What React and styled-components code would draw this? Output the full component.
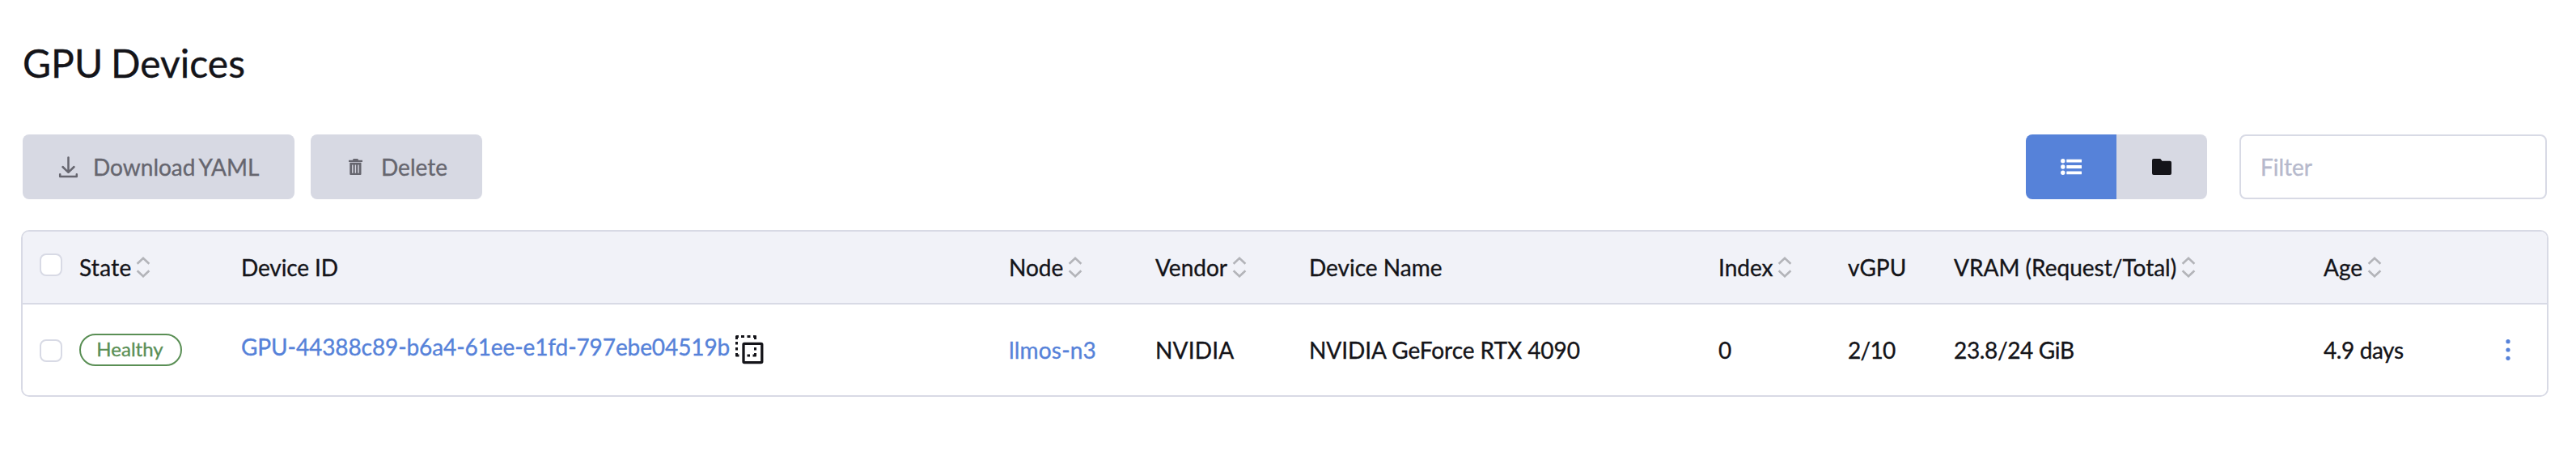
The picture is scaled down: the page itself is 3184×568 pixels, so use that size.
import React from "react";
import styled, { createGlobalStyle } from "styled-components";

const Global = createGlobalStyle`
  * { box-sizing: border-box; }
  body {
    margin: 0;
    background: #fff;
    color: #141419;
    font: 28px/34px Lato, sans-serif;
    -webkit-text-stroke: 0.35px;
  }
`;
const Page = styled.main`
  width: 3184px;
  height: 568px;
  padding: 49px 34px 0 26px;
`;
const Title = styled.h1`
  margin: 0 0 59px;
  padding-left: 2px;
  font-size: 48px;
  line-height: 58px;
  font-weight: 400;
  word-spacing: -2.4px;
`;
const Toolbar = styled.div`
  display: flex;
  height: 80px;
  margin: 0 2px 38px;
`;
const ActionButton = styled.button`
  display: flex;
  align-items: center;
  width: ${(p) => p.$width}px;
  margin-right: 20px;
  padding: 0 0 0 42px;
  border: 0;
  border-radius: 8px;
  background: #d7d9e3;
  color: #66666f;
  font: inherit;
  word-spacing: -2px;
  svg { margin-right: 13px; }
`;
const Toggle = styled.div`
  display: flex;
  margin-left: auto;
  border-radius: 8px;
  overflow: hidden;
`;
const ToggleButton = styled.button`
  display: flex;
  align-items: center;
  justify-content: center;
  width: 112px;
  padding: 0;
  border: 0;
  color: ${(p) => (p.$active ? "#fff" : "#141419")};
  background: ${(p) => (p.$active ? "#5682d9" : "#d7d9e3")};
`;
const Filter = styled.input`
  width: 380px;
  margin-left: 40px;
  padding: 0 24px;
  border: 2px solid #d8dae5;
  border-radius: 8px;
  background: #fff;
  font: inherit;
  &::placeholder { color: #b6b9cc; opacity: 1; }
`;
const Table = styled.section`
  border: 2px solid #d8dae5;
  border-radius: 10px;
  overflow: hidden;
`;
const Row = styled.div`
  display: grid;
  grid-template-columns: 70px 200px 949px 181px 190px 506px 160px 131px 457px 1fr 54px;
  align-items: center;
  height: ${(p) => (p.$head ? 90 : 112)}px;
  background: ${(p) => (p.$head ? "#f1f2f8" : "#fff")};
  border-bottom: ${(p) => (p.$head ? "2px solid #d8dae5" : "0")};
`;
const Cell = styled.div`
  display: flex;
  align-items: center;
  white-space: nowrap;
  letter-spacing: ${(p) => p.$track || 0}px;
`;
const Check = styled.span`
  width: 28px;
  height: 28px;
  margin-left: 21px;
  margin-bottom: ${(p) => p.$lift || 0}px;
  margin-top: ${(p) => p.$drop || 0}px;
  border: 2px solid #d8dae5;
  border-radius: 8px;
  background: #fff;
`;
const Badge = styled.span`
  display: flex;
  align-items: center;
  justify-content: center;
  width: 127px;
  height: 40px;
  padding: 0 2px 2px 0;
  border: 2px solid #5a8f55;
  border-radius: 20px;
  color: #5a8f55;
  font-size: 24px;
  line-height: 30px;
`;
const Link = styled.a`
  color: #5682d9;
  margin-bottom: ${(p) => p.$lift || 0}px;
`;
const SortSvg = styled.svg`
  margin-left: 5.5px;
`;
const CopySvg = styled.svg`
  margin-left: 7px;
`;

const Sort = () => (
  <SortSvg width="18" height="28" viewBox="0 0 18 28" fill="none" stroke="#b3b4b9" strokeWidth="2.6">
    <path d="M1.6 9.800 9 2.700 16.400 9.800M1.600 18.200 9 25.300 16.400 18.200" />
  </SortSvg>
);
const DownloadIcon = () => (
  <svg width="32" height="32" viewBox="0 0 32 32" fill="none" stroke="currentColor" strokeWidth="2.5" strokeLinecap="round" strokeLinejoin="round">
    <path d="M14.500 4.500V22M7.500 16 14.500 22.800 21.500 16M4.200 25.300V27.900H24.800V25.300" />
  </svg>
);
const TrashIcon = () => (
  <svg width="32" height="32" viewBox="0 0 32 32" fill="currentColor">
    <path fillRule="evenodd" d="M5 7.700H9.800L10.800 6H16.200L17.200 7.700H22V10H5ZM6.300 10.800H20.500V25Q20.500 26 19.500 26H7.300Q6.300 26 6.300 25ZM9.100 13.500V23.700H10.500V13.500ZM12.700 13.500V23.700H14.100V13.500ZM16.300 13.500V23.700H17.700V13.500Z" />
  </svg>
);
const ListIcon = () => (
  <svg width="28" height="24" viewBox="0 0 28 24" fill="currentColor">
    {[4.7, 12, 19.3].map((y) => (
      <g key={y}>
        <circle cx="3.800" cy={y} r="2.700" />
        <rect x="8.300" y={y - 1.9} width="18.700" height="3.800" rx="0.500" />
      </g>
    ))}
  </svg>
);
const FolderIcon = () => (
  <svg width="28" height="24" viewBox="0 0 28 24" fill="currentColor">
    <path d="M4 2H11.500Q12.500 2 13 2.800L14.300 4.800H24Q26 4.800 26 6.800V20Q26 22 24 22H4Q2 22 2 20V4Q2 2 4 2Z" />
  </svg>
);
const CopyIcon = () => (
  <CopySvg width="36" height="36" viewBox="0 0 36 36" fill="#141419">
    <path d="M1 0H4V3H3V5H0V1ZM7 0H11V3H7ZM14.500 0H18.500V3H14.500ZM22 0H25Q26 0 26 1V5H23V3H22ZM0 8H3V11.500H0ZM0 15H3V18.500H0ZM0 22H3V23.500H4.500V26.500H1Q0 26.500 0 25.500ZM14.500 23.500H18V26.500H14.500ZM23 15H26V18.500H23ZM23 22H26V25.500Q26 26.500 25 26.500H21.500V23.500H23Z" />
    <rect x="10" y="10.300" width="22.800" height="23.300" rx="1" fill="none" stroke="#141419" strokeWidth="3.300" />
  </CopySvg>
);
const Dots = () => (
  <svg width="12" height="28" viewBox="0 0 12 28" fill="#5682d9">
    <circle cx="6" cy="3.700" r="2.600" />
    <circle cx="6" cy="14" r="2.600" />
    <circle cx="6" cy="24.300" r="2.600" />
  </svg>
);

const columns = [
  ["State", true, 0.3], ["Device ID", false, -0.1], ["Node", true], ["Vendor", true], ["Device Name", false],
  ["Index", true], ["vGPU", false], ["VRAM (Request/Total)", true], ["Age", true],
];

export default function App() {
  return (
    <Page>
      <Global />
      <Title>GPU Devices</Title>
      <Toolbar>
        <ActionButton $width={336}><DownloadIcon />Download YAML</ActionButton>
        <ActionButton $width={212}><TrashIcon />Delete</ActionButton>
        <Toggle>
          <ToggleButton $active><ListIcon /></ToggleButton>
          <ToggleButton><FolderIcon /></ToggleButton>
        </Toggle>
        <Filter placeholder="Filter" />
      </Toolbar>
      <Table>
        <Row $head>
          <Check $lift={6} />
          {columns.map(([name, sortable, track]) => (
            <Cell key={name} $track={track}>{name}{sortable && <Sort />}</Cell>
          ))}
        </Row>
        <Row>
          <Check $drop={2} />
          <Cell><Badge>Healthy</Badge></Cell>
          <Cell $track={-0.095}><Link $lift={8}>GPU-44388c89-b6a4-61ee-e1fd-797ebe04519b</Link><CopyIcon /></Cell>
          <Cell $track={0.18}><Link>llmos-n3</Link></Cell>
          <Cell $track={0.2}>NVIDIA</Cell>
          <Cell $track={-0.05}>NVIDIA GeForce RTX 4090</Cell>
          <Cell>0</Cell>
          <Cell $track={-0.7}>2/10</Cell>
          <Cell $track={-0.35}>23.8/24 GiB</Cell>
          <Cell $track={-0.4}>4.9 days</Cell>
          <Cell><Dots /></Cell>
        </Row>
      </Table>
    </Page>
  );
}
